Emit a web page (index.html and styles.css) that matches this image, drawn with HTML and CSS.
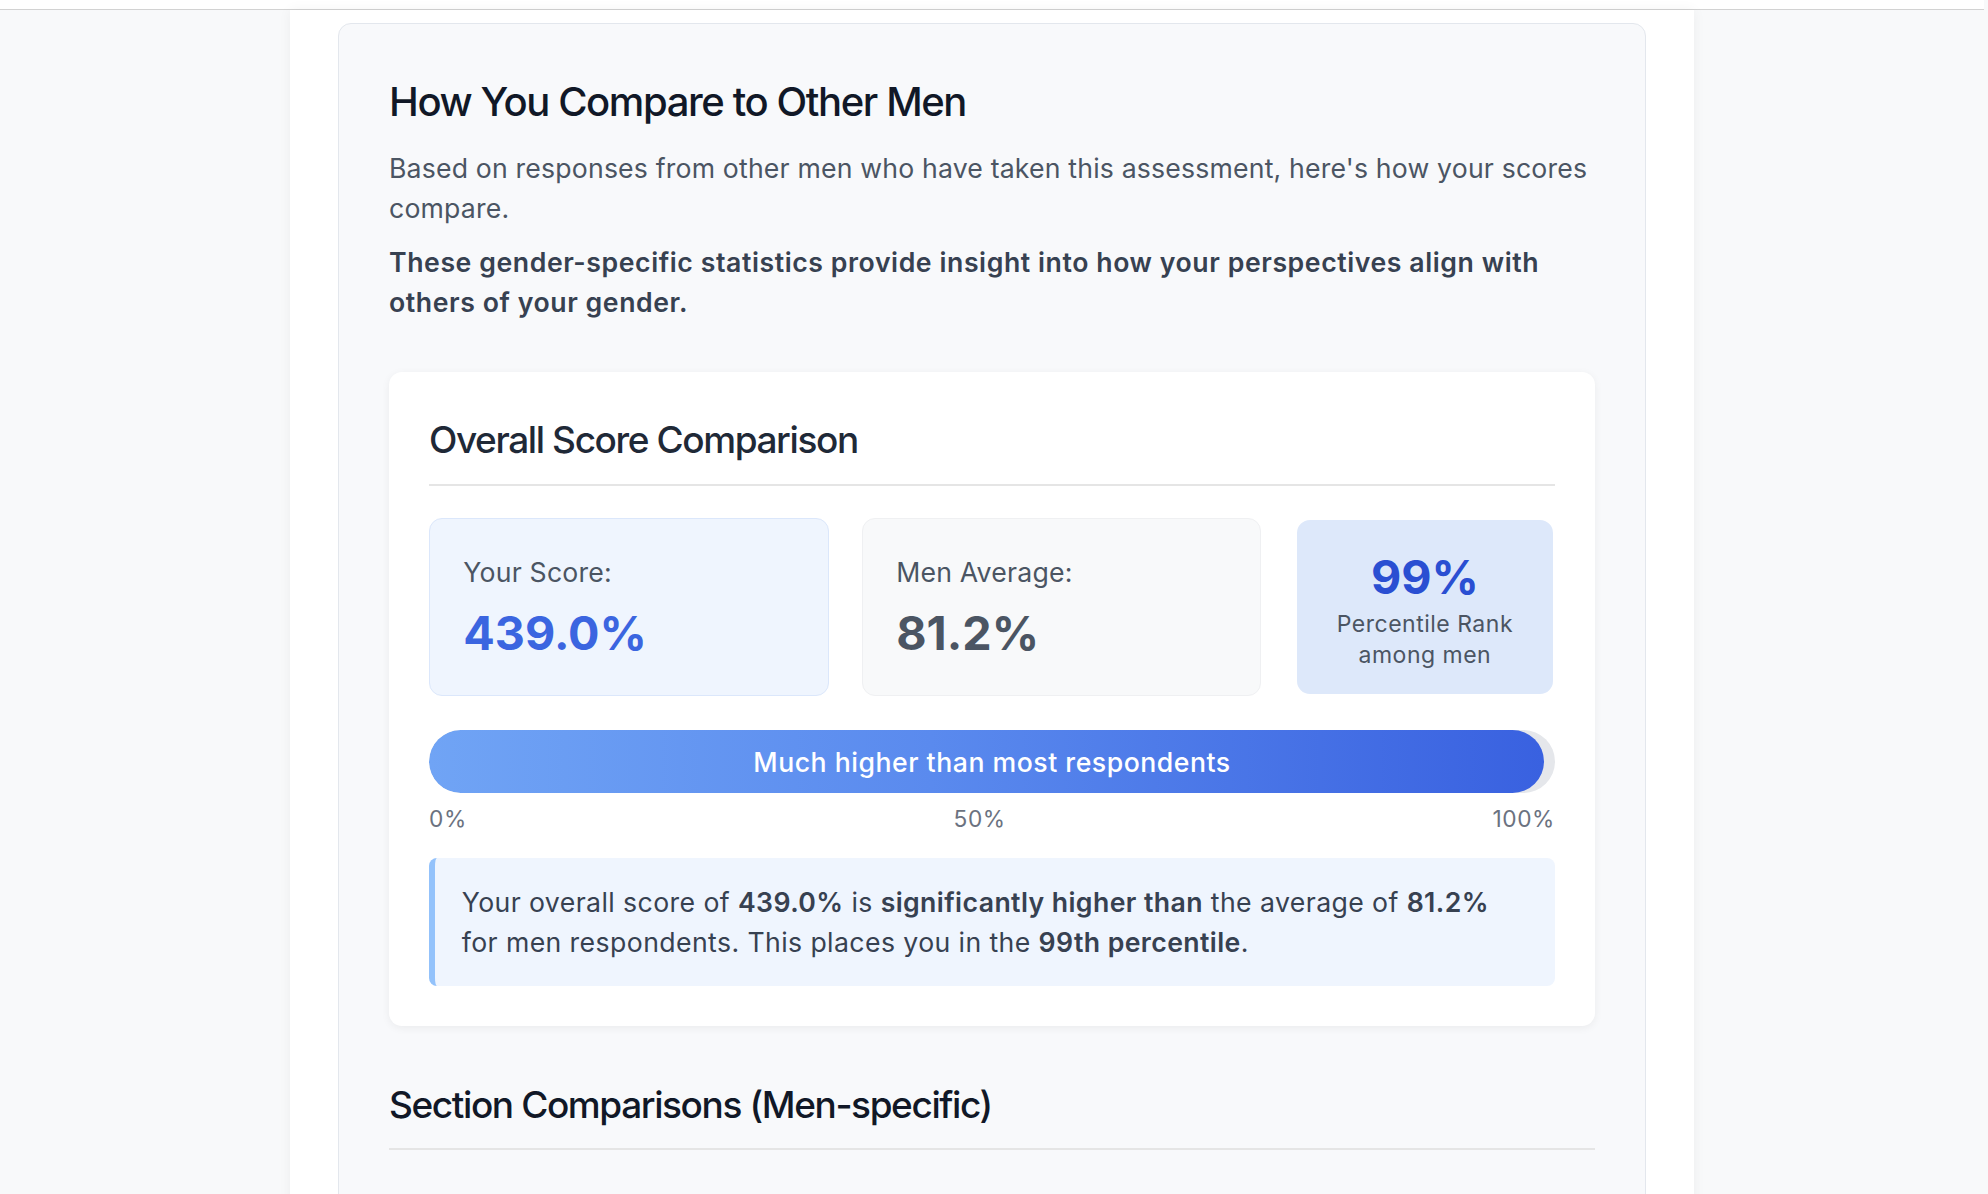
FILE: index.html
```html
<!DOCTYPE html>
<html lang="en">
<head>
<meta charset="utf-8">
<title>How You Compare to Other Men</title>
<link rel="stylesheet" href="styles.css">
</head>
<body>
<div class="topbar"></div>
<main class="page">
  <section class="compare-card">
    <h2 class="title">How You Compare to Other Men</h2>
    <p class="intro">Based on responses from other men who have taken this assessment, here's how your scores compare.</p>
    <p class="intro intro-strong">These gender-specific statistics provide insight into how your perspectives align with others of your gender.</p>

    <div class="overall-card">
      <h3 class="card-title">Overall Score Comparison</h3>
      <div class="stats">
        <div class="stat stat-you">
          <div class="stat-label">Your Score:</div>
          <div class="stat-value">439.0%</div>
        </div>
        <div class="stat stat-avg">
          <div class="stat-label">Men Average:</div>
          <div class="stat-value">81.2%</div>
        </div>
        <div class="stat stat-rank">
          <div class="rank-value">99%</div>
          <div class="rank-label">Percentile Rank<br>among men</div>
        </div>
      </div>

      <div class="bar">
        <div class="bar-fill" style="width: 99%"></div>
        <div class="bar-text">Much higher than most respondents</div>
      </div>
      <div class="ticks">
        <span>0%</span>
        <span>50%</span>
        <span>100%</span>
      </div>

      <div class="explain">
        Your overall score of <strong>439.0%</strong> is <strong>significantly higher than</strong> the average of <strong>81.2%</strong> for men respondents. This places you in the <strong>99th percentile</strong>.
      </div>
    </div>

    <h3 class="section-title">Section Comparisons (Men-specific)</h3>
    <div class="section-rest"></div>
  </section>
</main>
</body>
</html>
```

FILE: styles.css
```css
* {
  box-sizing: border-box;
}

html, body {
  margin: 0;
  padding: 0;
}

body {
  background: #f8f9fa;
  font-family: Inter, "Noto Sans", "Liberation Sans", sans-serif;
  color: #1f2937;
  overflow: hidden;
  padding-right: 4px;
}

.topbar {
  height: 10px;
  background: #ffffff;
  border-bottom: 1.5px solid #d2d2d2;
}

.page {
  width: 1404px;
  margin: 0 auto;
  background: #ffffff;
  padding: 13px 48px 0;
  box-shadow: 0 0 12px rgba(0, 0, 0, 0.05);
  min-height: 1200px;
}

.compare-card {
  background: #f8f9fb;
  border: 1.67px solid #e3e7ed;
  border-radius: 13px;
  padding: 52px 50px 40px;
}

.title {
  margin: 0 0 20px;
  font-size: 40px;
  line-height: 52px;
  font-weight: 500;
  color: #111827;
  letter-spacing: -1.4px;
}

.intro {
  margin: 0 0 14px;
  font-size: 26.67px;
  line-height: 40px;
  color: #4b5563;
  letter-spacing: 0.17px;
}

.intro-strong {
  margin-bottom: 50px;
  font-weight: 600;
  color: #374151;
  letter-spacing: 0.57px;
}

.overall-card {
  background: #ffffff;
  border-radius: 13px;
  padding: 40px;
  box-shadow: 0 2px 8px rgba(0, 0, 0, 0.06);
}

.card-title {
  margin: 0 0 32px;
  padding-bottom: 16px;
  border-bottom: 2px solid #e5e5e5;
  font-size: 37px;
  line-height: 56px;
  font-weight: 500;
  color: #1f2937;
  letter-spacing: -1.4px;
}

.stats {
  display: grid;
  grid-template-columns: 1fr 1fr auto;
  gap: 33.3px;
}

.stat {
  border-radius: 13px;
  padding: 33.3px;
  border: 1.67px solid transparent;
}

.stat-you {
  background: #eff5fe;
  border-color: #dbe7fb;
}

.stat-avg {
  background: #f8f9fa;
  border-color: #eff0f2;
}

.stat-rank {
  background: #dde8fa;
  border: 2px solid #ffffff;
  padding: 28.5px 40px 0;
  display: flex;
  flex-direction: column;
  align-items: center;
  justify-content: flex-start;
  text-align: center;
  border-radius: 15px;
}

.stat-label {
  font-size: 26.67px;
  line-height: 40px;
  color: #4b5563;
  margin-bottom: 13px;
  letter-spacing: 0.2px;
}

.stat-value {
  font-size: 46.67px;
  line-height: 56px;
  font-weight: 700;
  color: #4b5563;
}

.stat-you .stat-value {
  color: #3b65e0;
}

.rank-value {
  font-size: 46.67px;
  line-height: 56px;
  font-weight: 700;
  color: #2a4fd2;
}

.rank-label {
  margin-top: 4px;
  font-size: 23px;
  line-height: 31px;
  color: #4b5563;
  letter-spacing: 0.5px;
}

.bar {
  position: relative;
  margin-top: 34.5px;
  height: 63.3px;
  border-radius: 32px;
  background: #e5e7eb;
  overflow: hidden;
}

.bar-fill {
  height: 100%;
  border-radius: 32px;
  background: linear-gradient(90deg, #70a4f5 0%, #5a8aee 45%, #3961e0 100%);
}

.bar-text {
  position: absolute;
  inset: 0;
  display: flex;
  align-items: center;
  justify-content: center;
  color: #ffffff;
  font-size: 26.67px;
  font-weight: 500;
  letter-spacing: 0.5px;
}

.ticks {
  display: flex;
  justify-content: space-between;
  margin-top: 8.3px;
  font-size: 22.7px;
  line-height: 34px;
  color: #6b7280;
  letter-spacing: 0.6px;
}

.explain {
  margin-top: 22.7px;
  background: #eff5fe;
  border-left: 6.67px solid #93c2fb;
  border-radius: 8px;
  padding: 23.7px 26.7px;
  font-size: 26.67px;
  line-height: 40px;
  color: #374151;
  letter-spacing: 0.4px;
}

.explain strong {
  font-weight: 600;
}

.section-title {
  margin: 51.3px 0 0;
  padding-bottom: 14.5px;
  border-bottom: 2px solid #e5e5e5;
  font-size: 37px;
  line-height: 56px;
  font-weight: 500;
  color: #111827;
  letter-spacing: -1.4px;
}

.section-rest {
  height: 200px;
}
```
